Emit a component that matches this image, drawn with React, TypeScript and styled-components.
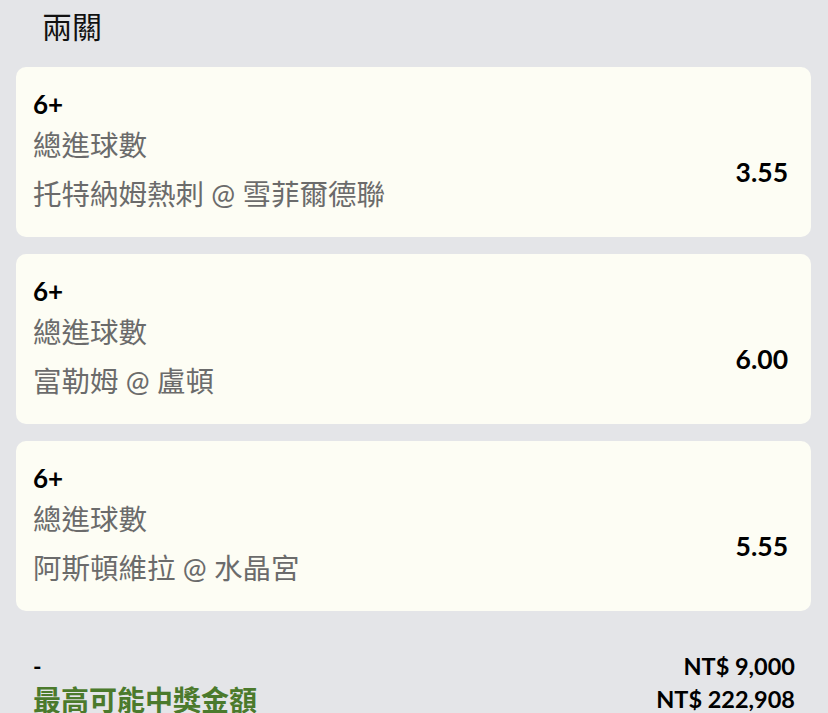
import styled, { createGlobalStyle } from "styled-components";

const GlobalStyle = createGlobalStyle`
  html, body {
    margin: 0;
    padding: 0;
    background: #e4e5e8;
  }
  body {
    font-family: Lato, "Noto Sans CJK TC", sans-serif;
  }
`;

type Leg = {
  pick: string;
  market: string;
  match: string;
  odds: string;
};

const legs: Leg[] = [
  { pick: "6+", market: "總進球數", match: "托特納姆熱刺 @ 雪菲爾德聯", odds: "3.55" },
  { pick: "6+", market: "總進球數", match: "富勒姆 @ 盧頓", odds: "6.00" },
  { pick: "6+", market: "總進球數", match: "阿斯頓維拉 @ 水晶宮", odds: "5.55" },
];

export default function App() {
  return (
    <Page>
      <GlobalStyle />
      <Title>兩關</Title>
      <CardList>
        {legs.map((leg, i) => (
          <Card key={i}>
            <Info>
              <Pick>{leg.pick}</Pick>
              <Market>{leg.market}</Market>
              <Match>{leg.match}</Match>
            </Info>
            <Odds>{leg.odds}</Odds>
          </Card>
        ))}
      </CardList>
      <Summary>
        <SummaryRow>
          <Dash>-</Dash>
          <Amount>NT$ 9,000</Amount>
        </SummaryRow>
        <SummaryRow>
          <WinLabel>最高可能中獎金額</WinLabel>
          <Amount>NT$ 222,908</Amount>
        </SummaryRow>
      </Summary>
    </Page>
  );
}

const Page = styled.div`
  display: flex;
  flex-direction: column;
  width: 828px;
  height: 713px;
  overflow: hidden;
  background: #e4e5e8;
`;

const Title = styled.div`
  flex-shrink: 0;
  padding: 7px 0 0 42px;
  height: 67px;
  box-sizing: border-box;
  font-size: 30px;
  line-height: 38px;
  color: #111;
`;

const CardList = styled.div`
  display: flex;
  flex-direction: column;
  gap: 17px;
  padding: 0 17px 0 16px;
`;

const Card = styled.div`
  display: flex;
  justify-content: space-between;
  align-items: center;
  flex-shrink: 0;
  height: 170px;
  box-sizing: border-box;
  padding: 20px 23px 21px 17px;
  background: #fdfdf4;
  border-radius: 10px;
`;

const Info = styled.div`
  display: flex;
  flex-direction: column;
`;

const Pick = styled.div`
  font-size: 26px;
  font-weight: 700;
  line-height: 34px;
  color: #000;
`;

const Market = styled.div`
  margin-top: 2px;
  font-size: 28.5px;
  line-height: 44px;
  color: #6b6b6b;
`;

const Match = styled.div`
  margin-top: 5px;
  font-size: 28.5px;
  line-height: 44px;
  color: #6b6b6b;
`;

const Odds = styled.div`
  padding-top: 40px;
  font-size: 26.5px;
  font-weight: 700;
  color: #000;
`;

const Summary = styled.div`
  display: flex;
  flex-direction: column;
  padding: 38px 33px 0 33px;
`;

const SummaryRow = styled.div`
  display: flex;
  justify-content: space-between;
  align-items: center;
  height: 33px;
`;

const Dash = styled.div`
  font-size: 23px;
  font-weight: 700;
  color: #000;
`;

const Amount = styled.div`
  font-size: 23.5px;
  font-weight: 700;
  color: #000;
`;

const WinLabel = styled.div`
  font-size: 28px;
  font-weight: 700;
  color: #4b7a2c;
`;
